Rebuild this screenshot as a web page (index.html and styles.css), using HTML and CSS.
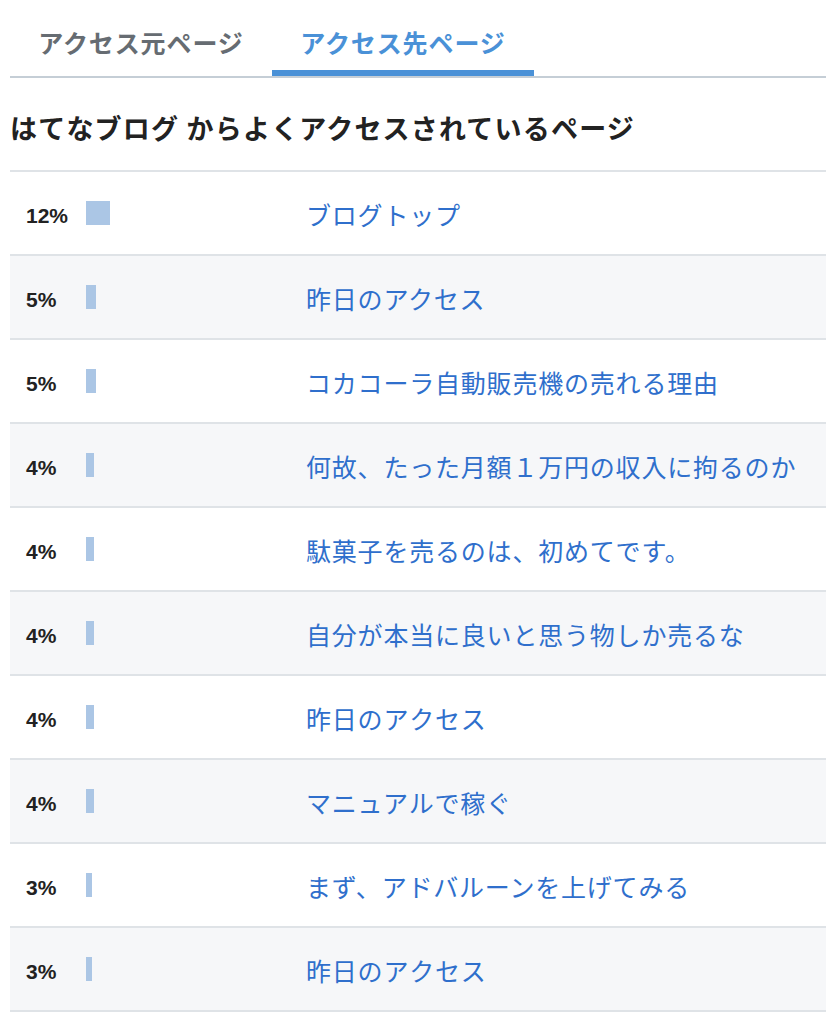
FILE: index.html
```html
<!DOCTYPE html>
<html lang="ja">
<head>
<meta charset="utf-8">
<title>アクセス先ページ</title>
<link rel="stylesheet" href="styles.css">
</head>
<body>
<div class="page">
  <nav class="tabs">
    <a class="tab">アクセス元ページ</a>
    <a class="tab tab-active">アクセス先ページ</a>
  </nav>
  <h2 class="heading">はてなブログ からよくアクセスされているページ</h2>
  <ul class="list">
    <li class="row"><span class="pct">12%</span><span class="bar-cell"><span class="bar" style="width:24px"></span></span><a class="link">ブログトップ</a></li>
    <li class="row"><span class="pct">5%</span><span class="bar-cell"><span class="bar" style="width:10px"></span></span><a class="link">昨日のアクセス</a></li>
    <li class="row"><span class="pct">5%</span><span class="bar-cell"><span class="bar" style="width:10px"></span></span><a class="link">コカコーラ自動販売機の売れる理由</a></li>
    <li class="row"><span class="pct">4%</span><span class="bar-cell"><span class="bar" style="width:8px"></span></span><a class="link">何故、たった月額１万円の収入に拘るのか</a></li>
    <li class="row"><span class="pct">4%</span><span class="bar-cell"><span class="bar" style="width:8px"></span></span><a class="link">駄菓子を売るのは、初めてです。</a></li>
    <li class="row"><span class="pct">4%</span><span class="bar-cell"><span class="bar" style="width:8px"></span></span><a class="link">自分が本当に良いと思う物しか売るな</a></li>
    <li class="row"><span class="pct">4%</span><span class="bar-cell"><span class="bar" style="width:8px"></span></span><a class="link">昨日のアクセス</a></li>
    <li class="row"><span class="pct">4%</span><span class="bar-cell"><span class="bar" style="width:8px"></span></span><a class="link">マニュアルで稼ぐ</a></li>
    <li class="row"><span class="pct">3%</span><span class="bar-cell"><span class="bar" style="width:6px"></span></span><a class="link">まず、アドバルーンを上げてみる</a></li>
    <li class="row"><span class="pct">3%</span><span class="bar-cell"><span class="bar" style="width:6px"></span></span><a class="link">昨日のアクセス</a></li>
  </ul>
</div>
</body>
</html>
```

FILE: styles.css
```css
html, body {
  margin: 0;
  padding: 0;
  background: #ffffff;
}
body {
  font-family: "Noto Sans CJK JP", "Noto Sans", sans-serif;
  color: #222222;
}
.page {
  padding-left: 10px;
}
.tabs {
  display: flex;
  height: 78px;
  box-sizing: border-box;
  border-bottom: 2px solid #c5ced6;
}
.tab {
  width: 262px;
  height: 76px;
  box-sizing: border-box;
  padding-top: 14px;
  border-bottom: 6px solid transparent;
  display: flex;
  align-items: center;
  justify-content: center;
  font-size: 25px;
  font-weight: 700;
  letter-spacing: 0.9px;
  color: #666c72;
}
.tab-active {
  color: #4a91d7;
  border-bottom-color: #4a91d7;
}
.heading {
  margin: 0;
  height: 92px;
  box-sizing: border-box;
  padding-top: 6px;
  display: flex;
  align-items: center;
  font-size: 27px;
  font-weight: 700;
  letter-spacing: 1.2px;
  color: #222222;
}
.list {
  list-style: none;
  margin: 0;
  padding: 0;
  border-bottom: 2px solid #dfe3e7;
}
.row {
  display: flex;
  align-items: center;
  height: 84px;
  box-sizing: border-box;
  border-top: 2px solid #dfe3e7;
}
.row:nth-child(even) {
  background: #f6f7f9;
}
.pct {
  width: 76px;
  box-sizing: border-box;
  padding-left: 16px;
  font-family: "Liberation Sans", Arial, sans-serif;
  font-weight: 700;
  font-size: 21px;
  color: #222222;
  padding-top: 6px;
}
.bar-cell {
  width: 220px;
  display: flex;
  align-items: center;
}
.bar {
  display: block;
  height: 24px;
  background: #abc6e5;
}
.link {
  font-size: 25px;
  letter-spacing: 0.8px;
  color: #2f6fcc;
  padding-top: 2px;
}
```
